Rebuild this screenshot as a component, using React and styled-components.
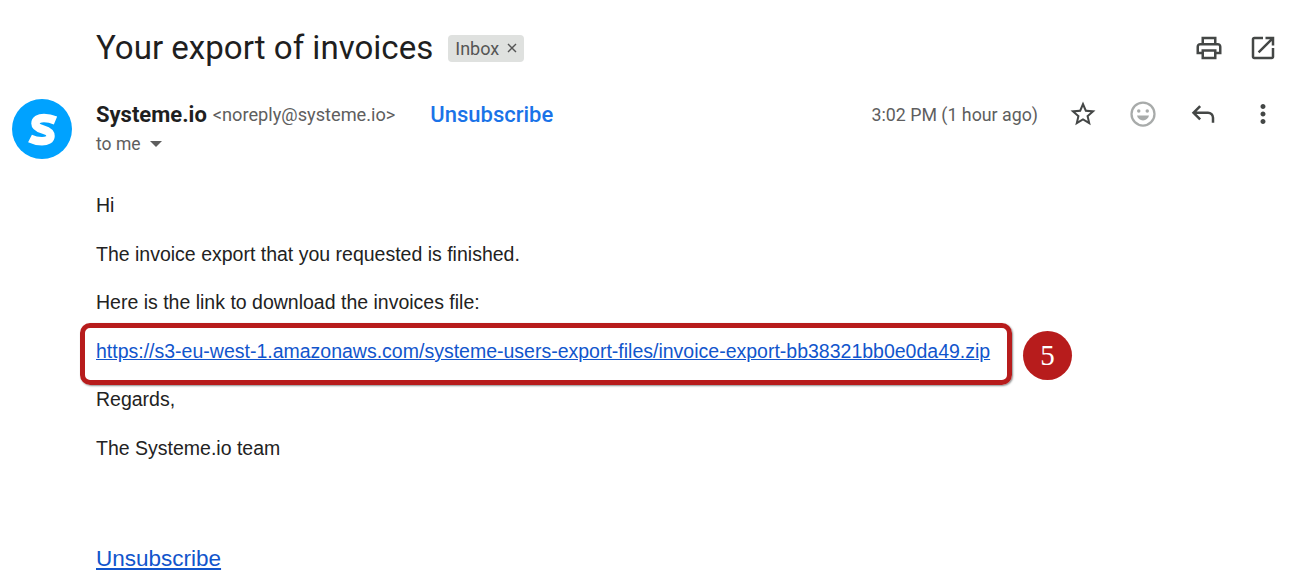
import React from 'react'
import styled, { createGlobalStyle } from 'styled-components'

const GlobalStyle = createGlobalStyle`
  html, body {
    margin: 0;
    background: #fff;
    overflow: hidden;
  }
`

const Page = styled.div`
  width: 1305px;
  height: 582px;
  position: relative;
  overflow: hidden;
  padding: 24px 0 0 12px;
  box-sizing: border-box;
  font-family: Roboto, "Liberation Sans", sans-serif;
`

const SubjectRow = styled.div`
  display: flex;
  align-items: center;
  height: 48px;
  padding-left: 84px;
`

const Subject = styled.h1`
  margin: 0;
  font-family: Roboto, sans-serif;
  font-size: 33.1px;
  font-weight: 400;
  line-height: 48px;
  color: #1f1f1f;
`

const Label = styled.span`
  display: flex;
  align-items: center;
  gap: 8px;
  height: 27px;
  margin-left: 15px;
  padding: 0 7px;
  border-radius: 4px;
  background: #dfe1df;
  color: #555;
  font-size: 18px;
`

const TopIcons = styled.div`
  margin-left: auto;
  display: flex;
  gap: 24px;
  padding-right: 27px;
`

const HeaderRow = styled.div`
  display: flex;
  margin-top: 27px;
`

const Avatar = styled.div`
  width: 60px;
  height: 60px;
  border-radius: 50%;
  background: #00a2ff;
  flex-shrink: 0;
`

const SenderCol = styled.div`
  margin-left: 24px;
  flex: 1;
`

const SenderRow = styled.div`
  display: flex;
  align-items: center;
  height: 30px;
`

const SenderName = styled.span`
  font-size: 22px;
  font-weight: 700;
  color: #1f1f1f;
`

const SenderMail = styled.span`
  margin-left: 6px;
  font-size: 18.2px;
  color: #5e5e5e;
`

const HeaderLink = styled.span`
  margin-left: 35px;
  font-size: 22px;
  font-weight: 500;
  color: #1a73e8;
`

const Meta = styled.div`
  margin-left: auto;
  display: flex;
  align-items: center;
  padding-right: 12px;
`

const Time = styled.span`
  font-size: 17.8px;
  color: #5e5e5e;
  margin-right: 15px;
`

const ActionSlot = styled.span`
  width: 60px;
  display: flex;
  justify-content: center;
`

const ToMe = styled.div`
  display: flex;
  align-items: center;
  gap: 9px;
  height: 30px;
  font-size: 17.5px;
  color: #5e5e5e;
`

const Body = styled.div`
  padding: 35px 0 0 84px;
  font-family: "Liberation Sans", Arial, sans-serif;
  font-size: 19.5px;
  color: #222;
`

const Para = styled.p`
  margin: 0 0 ${p => p.$after || 25.6}px;
  height: 23px;
  line-height: 23px;
`

const MailLink = styled.a`
  color: #1155cc;
  text-decoration: underline;
  font-size: ${p => p.$size || 19.5}px;
`

const Callout = styled.div`
  position: absolute;
  left: 80px;
  top: 323px;
  width: 932px;
  height: 62px;
  box-sizing: border-box;
  border: 5px solid #b71c1c;
  border-radius: 10px;
  box-shadow: 1px 1px 2px rgba(0, 0, 0, 0.45);
`

const StepBadge = styled.div`
  position: absolute;
  left: 1023px;
  top: 331px;
  width: 49px;
  height: 49px;
  border-radius: 50%;
  background: #b71c1c;
  color: #fff;
  display: flex;
  align-items: center;
  justify-content: center;
  font-family: "Liberation Serif", serif;
  font-size: 29px;
`

const Icon = ({ d, size = 30, color = '#444746' }) => (
  <svg width={size} height={size} viewBox="0 0 24 24" fill={color} style={{ display: 'block' }}>
    <path d={d} />
  </svg>
)

const printPath = 'M19 8h-1V3H6v5H5c-1.66 0-3 1.34-3 3v6h4v4h12v-4h4v-6c0-1.66-1.34-3-3-3zM8 5h8v3H8V5zm8 14H8v-4h8v4zm2-4v-2H6v2H4v-4c0-.55.45-1 1-1h14c.55 0 1 .45 1 1v4h-2z'
const openPath = 'M19 19H5V5h7V3H5c-1.1 0-2 .9-2 2v14c0 1.1.9 2 2 2h14c1.1 0 2-.9 2-2v-7h-2v7zM14 3v2h3.59l-9.83 9.83 1.41 1.41L19 6.41V10h2V3h-7z'
const starPath = 'M22 9.24l-7.19-.62L12 2 9.19 8.63 2 9.24l5.46 4.73L5.82 21 12 17.27 18.18 21l-1.63-7.03L22 9.24zM12 15.4l-3.76 2.27 1-4.28-3.32-2.88 4.38-.38L12 6.1l1.71 4.04 4.38.38-3.32 2.88 1 4.28L12 15.4z'
const replyPath = 'M19 19v-4q0-1.25-.875-2.125T16 12H6.825l3.6 3.6L9 17l-6-6 6-6 1.425 1.4-3.6 3.6H16q2.075 0 3.538 1.463T21 15v4h-2z'
const morePath = 'M12 8c1.1 0 2-.9 2-2s-.9-2-2-2-2 .9-2 2 .9 2 2 2zm0 2c-1.1 0-2 .9-2 2s.9 2 2 2 2-.9 2-2-.9-2-2-2zm0 6c-1.1 0-2 .9-2 2s.9 2 2 2 2-.9 2-2-.9-2-2-2z'

const Smiley = () => (
  <svg width="30" height="30" viewBox="0 0 24 24" style={{ display: 'block' }}>
    <circle cx="12" cy="12" r="9.2" fill="none" stroke="#a8abaa" strokeWidth="1.8" />
    <circle cx="8.6" cy="9.6" r="1.4" fill="#a8abaa" />
    <circle cx="15.4" cy="9.6" r="1.4" fill="#a8abaa" />
    <path d="M7.2 13.2h9.6c-.5 2.4-2.4 3.9-4.8 3.9s-4.3-1.5-4.8-3.9z" fill="#a8abaa" />
  </svg>
)

const LogoS = () => (
  <svg width="60" height="60" viewBox="0 0 60 60" style={{ display: 'block' }}>
    <path
      d="M43.500 21.500C39.500 19.800 35.500 19 32 19C27 19 23.500 21 23.500 24.500C23.500 28 27 29.300 31 30.500C35.500 31.800 38.500 33.500 38.500 37C38.500 40.500 35 42.300 30 42.300C26.500 42.300 22 41.500 18 39.500"
      fill="none"
      stroke="#fff"
      strokeWidth="8.5"
    />
  </svg>
)

export default function App() {
  return (
    <>
      <GlobalStyle />
      <Page>
        <SubjectRow>
          <Subject>Your export of invoices</Subject>
          <Label>
            Inbox
            <svg width="10" height="10" viewBox="0 0 10 10">
              <path d="M1 1l8 8M9 1l-8 8" stroke="#555" strokeWidth="1.4" />
            </svg>
          </Label>
          <TopIcons>
            <Icon d={printPath} />
            <Icon d={openPath} />
          </TopIcons>
        </SubjectRow>

        <HeaderRow>
          <Avatar><LogoS /></Avatar>
          <SenderCol>
            <SenderRow>
              <SenderName>Systeme.io</SenderName>
              <SenderMail>&lt;noreply@systeme.io&gt;</SenderMail>
              <HeaderLink>Unsubscribe</HeaderLink>
              <Meta>
                <Time>3:02 PM (1 hour ago)</Time>
                <ActionSlot><Icon d={starPath} /></ActionSlot>
                <ActionSlot><Smiley /></ActionSlot>
                <ActionSlot><Icon d={replyPath} /></ActionSlot>
                <ActionSlot><Icon d={morePath} /></ActionSlot>
              </Meta>
            </SenderRow>
            <ToMe>
              to me
              <svg width="12" height="6" viewBox="0 0 12 6">
                <path d="M0 0h12L6 6z" fill="#5e5e5e" />
              </svg>
            </ToMe>
          </SenderCol>
        </HeaderRow>

        <Body>
          <Para>Hi</Para>
          <Para>The invoice export that you requested is finished.</Para>
          <Para>Here is the link to download the invoices file:</Para>
          <Para>
            <MailLink href="#">https://s3-eu-west-1.amazonaws.com/systeme-users-export-files/invoice-export-bb38321bb0e0da49.zip</MailLink>
          </Para>
          <Para>Regards,</Para>
          <Para $after={87}>The Systeme.io team</Para>
          <Para><MailLink href="#" $size={22.5}>Unsubscribe</MailLink></Para>
        </Body>

        <Callout />
        <StepBadge>5</StepBadge>
      </Page>
    </>
  )
}
